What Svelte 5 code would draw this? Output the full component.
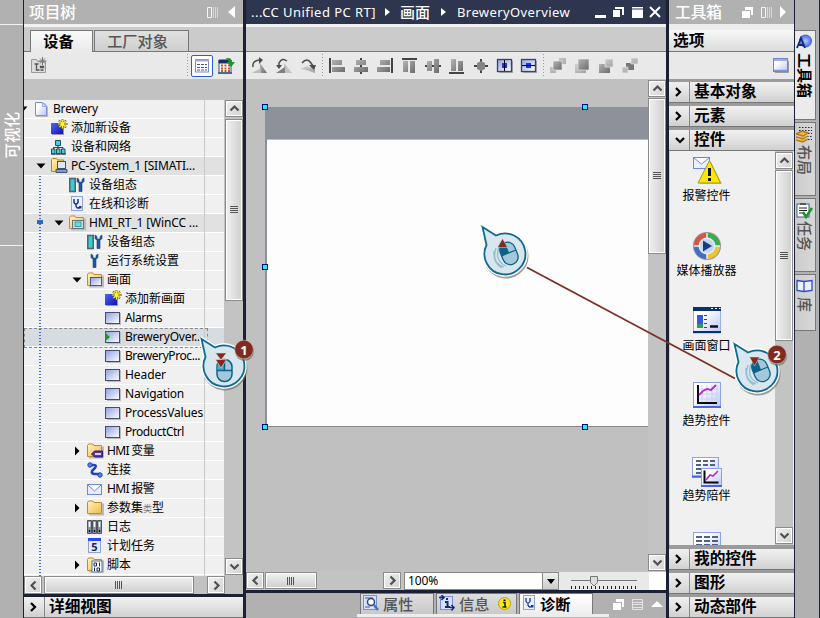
<script>
  // Spreads letters so that a label takes exactly w pixels.
  function fit(node, w) {
    if (!w) return;
    const n = [...node.textContent].length;
    const natural = node.getBoundingClientRect().width;
    node.style.letterSpacing = (w - natural) / n + 'px';
  }

  const rows = [
    { t: 'Brewery', l: 0, i: 'page', a: 'd', w: 45 },
    { t: '添加新设备', l: 1, i: 'add' },
    { t: '设备和网络', l: 1, i: 'net' },
    { t: 'PC-System_1 [SIMATI...', l: 1, i: 'pc', a: 'd', w: 124, hl: true },
    { t: '设备组态', l: 2, i: 'config' },
    { t: '在线和诊断', l: 2, i: 'diag' },
    { t: 'HMI_RT_1 [WinCC ...', l: 2, i: 'hmi', a: 'd', w: 109, hl: true },
    { t: '设备组态', l: 3, i: 'config' },
    { t: '运行系统设置', l: 3, i: 'wrench' },
    { t: '画面', l: 3, i: 'screens', a: 'd' },
    { t: '添加新画面', l: 4, i: 'add' },
    { t: 'Alarms', l: 4, i: 'screen', w: 37 },
    { t: 'BreweryOver...', l: 4, i: 'start', w: 78, sel: true },
    { t: 'BreweryProc...', l: 4, i: 'screen', w: 75 },
    { t: 'Header', l: 4, i: 'screen', w: 41 },
    { t: 'Navigation', l: 4, i: 'screen', w: 59 },
    { t: 'ProcessValues', l: 4, i: 'screen', w: 78 },
    { t: 'ProductCtrl', l: 4, i: 'screen', w: 59 },
    { t: 'HMI 变量', l: 3, i: 'tags', a: 'r', w: 47 },
    { t: '连接', l: 3, i: 'link' },
    { t: 'HMI 报警', l: 3, i: 'mail', w: 47 },
    { t: '参数集类型', l: 3, i: 'folder', a: 'r', w: 57 },
    { t: '日志', l: 3, i: 'logs' },
    { t: '计划任务', l: 3, i: 'task' },
    { t: '脚本', l: 3, i: 'script', a: 'r' }
  ];
  const controls = [
    { t: '报警控件', i: 'alarm' },
    { t: '媒体播放器', i: 'media' },
    { t: '画面窗口', i: 'window' },
    { t: '趋势控件', i: 'trend' },
    { t: '趋势陪伴', i: 'companion' },
    { t: '', i: 'table' }
  ];
  const sideTabs = [
    { t: '工具箱', i: 'shapes', h: 90, on: true },
    { t: '布局', i: 'layers', h: 74 },
    { t: '任务', i: 'tasks', h: 74 },
    { t: '库', i: 'book', h: 57 }
  ];
  const tools = [
    ['rot1', 'rot2', 'rot3'],
    ['al', 'ac', 'ar', 'at', 'am', 'ab', 'cc', 'ch', 'cv'],
    ['z1', 'z2', 'z3', 'z4']
  ];
</script>

<svg width="0" height="0" class="defs">
  <defs>
    <linearGradient id="gBlue" x1="0" y1="0" x2="1" y2="1"><stop offset="0" stop-color="#8ea0e0" /><stop offset="1" stop-color="#fff" /></linearGradient>
    <linearGradient id="gPage" x1="0" y1="0" x2="1" y2="1"><stop offset="0.3" stop-color="#fff" /><stop offset="1" stop-color="#b9c6f5" /></linearGradient>
    <linearGradient id="gSq" x1="0" y1="0" x2="1" y2="1"><stop offset="0" stop-color="#4a6af8" /><stop offset="1" stop-color="#1010b8" /></linearGradient>
    <linearGradient id="gFold" x1="0" y1="0" x2="1" y2="1"><stop offset="0" stop-color="#fff3c0" /><stop offset="1" stop-color="#f0bb48" /></linearGradient>
    <linearGradient id="gGray" x1="0" y1="0" x2="1" y2="1"><stop offset="0" stop-color="#b4b4b4" /><stop offset="1" stop-color="#6c6c6c" /></linearGradient>
    <linearGradient id="gLight" x1="0" y1="0" x2="1" y2="1"><stop offset="0" stop-color="#d0d0d0" /><stop offset="1" stop-color="#a0a0a0" /></linearGradient>
    <radialGradient id="gBall"><stop offset="0" stop-color="#b5c8ff" /><stop offset="1" stop-color="#3f62e6" /></radialGradient>
  </defs>
</svg>

{#snippet treeIcon(n)}
  <svg class="ti" width="18" height="18" viewBox="0 0 18 18">
    {#if n === 'page'}
      <path d="M3 3h9l3 4v10H3z" fill="#bbb" /><path d="M2.500 2.500h7l4 4v9h-11z" fill="url(#gPage)" stroke="#7d8fe0" /><path d="M9.500 2.500v4h4z" fill="#d5ddfb" stroke="#7d8fe0" stroke-width=".7" />
    {:else if n === 'add'}
      <path d="M1 5h12v11H1z" fill="#999" /><path d="M0 4h12v11H0z" fill="url(#gSq)" /><path d="M11.500 0v10M6.500 5h10M8 1.500l7 7M15 1.500l-7 7" stroke="#5b5b18" stroke-width="1.800" /><path d="M11.500 .5v9M7 5h9M8.500 2l6 6M14.500 2l-6 6" stroke="#fff23a" stroke-width="1.200" />
    {:else if n === 'net'}
      <path d="M7 6v5M2.500 12v-2.500h9.500v2.500" fill="none" stroke="#1c4472" /><path d="M4.500 2.500h5v5h-5zM.5 11h3.500v5h-3.500zM5.500 11h3.500v5h-3.500zM10.500 11h3.500v5h-3.500z" fill="#39d5dc" stroke="#2b4a66" /><path d="M0 16h15" stroke="#333" />
    {:else if n === 'pc'}
      <path d="M.5 14.500v-12l1-1h4l1 1.500h6v11.500z" fill="url(#gFold)" stroke="#b98320" /><rect x="6.500" y="4.500" width="8" height="7" fill="#dce6f8" stroke="#39557e" /><path d="M5 12.500h11v3H5z" fill="#8d99ad" stroke="#39557e" />
    {:else if n === 'hmi' || n === 'screens' || n === 'script' || n === 'tags' || n === 'folder'}
      <path d="M2 15.500h14v-11" fill="none" stroke="#bbb" stroke-width="2" />
      <path d="M.5 14.500v-11l1-1.500h4.500l1 1.500h7.500v11z" fill="url(#gFold)" stroke="#c18c2c" />
      {#if n === 'hmi'}<rect x="3.500" y="6.500" width="11" height="8" fill="#d3d9dd" stroke="#66737b" /><rect x="6" y="8" width="6" height="4.500" fill="#5fe0e0" stroke="#2e7d84" stroke-width=".7" />
      {:else if n === 'screens'}<rect x="3.500" y="6.500" width="11" height="8" fill="url(#gBlue)" stroke="#4a5a90" />
      {:else if n === 'script'}<rect x="5" y="5" width="10" height="11" fill="#fff" stroke="#4a76a0" /><path d="M7 7h2.500v3h-2.500zM12.500 6.500v4M7.500 11.500v3.500M10 12h2.500v3h-2.500z" fill="none" stroke="#16245c" />
      {:else if n === 'tags'}<path d="M4.500 12l3-3h8v6h-8z" fill="#5b35a8" stroke="#321870" /><path d="M8 12h6" stroke="#fff" stroke-width="1.500" />{/if}
    {:else if n === 'config'}
      <rect x=".8" y="2.500" width="5.400" height="13" fill="#2ad4d6" stroke="#59626c" stroke-width="1.600" /><path d="M8 2v3.500l2 2v8h3v-8l2-2V2L13 3.500V6h-3V3.500z" fill="#2157a0" stroke="#18406f" stroke-width=".6" />
    {:else if n === 'wrench'}
      <path d="M4 2v3.500l2 2v8h3v-8l2-2V2L9 3.500V6H6V3.500z" fill="#2157a0" stroke="#18406f" stroke-width=".6" />
    {:else if n === 'diag'}
      <rect x="2.500" y="1.500" width="11" height="14" fill="#edf1ff" stroke="#93a2d8" /><path d="M5 4v3.500q2 3 4 0V4M7 9v2q1 3 3.500 1.500" fill="none" stroke="#173a86" stroke-width="1.500" /><rect x="10" y="11" width="2.500" height="2.500" fill="#173a86" />
    {:else if n === 'screen' || n === 'start'}
      <path d="M2 4h14v12H2z" fill="#bbb" /><rect x=".5" y="3.500" width="14" height="11" fill="url(#gBlue)" stroke="#444e6c" />
      {#if n === 'start'}<path d="M0 4.500l5 4.500-5 4.500z" fill="#1d9428" />{/if}
    {:else if n === 'link'}
      <path d="M2 4h5q3 0 1 3l-3 3q-1 3 3 3h5" fill="none" stroke="#2045b8" stroke-width="2.500" /><circle cx="3" cy="4" r="2.200" fill="#5a7dee" stroke="#2045b8" /><circle cx="13" cy="14" r="2.200" fill="#5a7dee" stroke="#2045b8" />
    {:else if n === 'mail'}
      <rect x=".5" y="4.500" width="14" height="10" fill="#e6ecff" stroke="#7088d8" /><path d="M1 5l6.500 6L14 5" fill="#fff" stroke="#7088d8" />
    {:else if n === 'logs'}
      <path d="M.5 2.500h4v13h-4zM5.500 2.500h4v13h-4zM10.500 2.500h4v13h-4z" fill="#8a93a0" stroke="#4b545f" /><path d="M2.500 4v5M7.500 4v5M12.500 4v5" stroke="#fff" stroke-width="1.600" /><path d="M2.500 12v2M7.500 12v2M12.500 12v2" stroke="#111" stroke-width="1.500" />
    {:else if n === 'task'}
      <rect x="1.500" y="1.500" width="12" height="14" fill="#e6ebff" stroke="#93a2d8" /><path d="M1 1h13v3H1z" fill="#2c4bea" /><text x="7.500" y="13.500" text-anchor="middle" class="five">5</text>
    {/if}
  </svg>
{/snippet}

{#snippet tool(n)}
  <svg width="24" height="24" viewBox="-12 -12 24 24">
    {#if n === 'rot1'}
      <path d="M0 7V-3L7 7z" fill="url(#gGray)" /><path d="M-8 7l9-5v5z" fill="#bbb" /><path d="M-7 1q-1-6 6-7" fill="none" stroke="#4c4c4c" stroke-width="1.500" /><path d="M-1-9l4 3-4 4z" fill="#4c4c4c" />
    {:else if n === 'rot2'}
      <path d="M0 7V-3L8 7z" fill="#c2c2c2" /><path d="M-8 7l9-6v6z" fill="#808080" /><path d="M3-5q-5-4-8 2v3" fill="none" stroke="#4c4c4c" stroke-width="1.500" /><path d="M-8-1h6l-3 4z" fill="#4c4c4c" />
    {:else if n === 'rot3'}
      <path d="M-8 3l8-3v4z" fill="#c2c2c2" /><path d="M-5 3l12 4V0z" fill="url(#gLight)" /><path d="M-6-3q5-6 9 0l2 3" fill="none" stroke="#4c4c4c" stroke-width="1.500" /><path d="M1-1h7l-2 5z" fill="#4c4c4c" />
    {:else if n === 'al'}
      <path d="M-7-8v15" stroke="#444" stroke-width="2" /><path d="M-5-6h10v5H-5zM-5 1H8v5H-5z" fill="url(#gGray)" />
    {:else if n === 'ac'}
      <path d="M0-8V8" stroke="#444" stroke-width="2" /><path d="M-5-6H5v5H-5zM-7 1H7v5H-7z" fill="url(#gGray)" />
    {:else if n === 'ar'}
      <path d="M7-8v15" stroke="#444" stroke-width="2" /><path d="M-5-6H5v5H-5zM-8 1H5v5H-8z" fill="url(#gGray)" />
    {:else if n === 'at'}
      <path d="M-7-7H8" stroke="#444" stroke-width="2" /><path d="M-6-5h5V6h-5zM1-5h5V7H1z" fill="url(#gGray)" />
    {:else if n === 'am'}
      <path d="M-8 0H8" stroke="#444" stroke-width="2" /><path d="M-6-5h5v10h-5zM1-7h5V7H1z" fill="url(#gGray)" />
    {:else if n === 'ab'}
      <path d="M-8 7H7" stroke="#444" stroke-width="2" /><path d="M-6-7h5V5h-5zM1-5h5v10H1z" fill="url(#gGray)" />
    {:else if n === 'cc'}
      <path d="M-7 0H7M0-7V7" stroke="#444" stroke-width="2" /><path d="M-4-3l4-2 4 2v6L0 5l-4-2z" fill="#858585" />
    {:else if n === 'ch' || n === 'cv'}
      <path d="M-6-5H8V7H-6z" fill="#aaa" /><rect x="-7.500" y="-6.500" width="14" height="12" fill="url(#gBlue)" stroke="#36426e" stroke-width="1.300" />
      {#if n === 'ch'}<rect x="-3" y="-3" width="5" height="5" fill="#1c35d8" /><path d="M-.5-6V5" stroke="#000" />
      {:else}<rect x="-3" y="-3" width="5" height="5" fill="#1c35d8" /><path d="M-7-.5H6" stroke="#000" />{/if}
    {:else if n === 'z1'}
      <path d="M1-8h7v6H1zM-8 1h6v6h-6z" fill="url(#gLight)" /><path d="M-5-5h9v9h-9z" fill="url(#gGray)" stroke="#eee" stroke-width=".6" />
    {:else if n === 'z2'}
      <path d="M-7-2H4v9H-7z" fill="url(#gLight)" /><path d="M-4-7H7V4H-4z" fill="url(#gGray)" stroke="#eee" stroke-width=".6" />
    {:else if n === 'z3'}
      <path d="M-7-2H4v9H-7z" fill="url(#gGray)" /><path d="M-1-7H7v8h-8z" fill="url(#gLight)" stroke="#eee" stroke-width=".6" />
    {:else}
      <path d="M-4-3h8v7h-8z" fill="#777" /><path d="M1-8h7v6H1zM-8 1h6v6h-6z" fill="url(#gLight)" stroke="#eee" stroke-width=".6" />
    {/if}
  </svg>
{/snippet}

{#snippet arrow(d)}
  <svg width="11" height="11" viewBox="-5.5 -5.5 11 11"><path d="M-4 2L0-2 4 2" transform="rotate({d})" fill="none" stroke="#505050" stroke-width="2.200" /></svg>
{/snippet}

{#snippet cards()}
  <svg width="11" height="11" viewBox="0 0 11 11"><path d="M3 0h8v8H9V3H3z" fill="#fff" /><path d="M0 4h8v7H0z" fill="#fff" /></svg>
{/snippet}
{#snippet bars()}
  <svg width="11" height="11" viewBox="0 0 11 11"><path d="M.5.5h4v10h-4z" fill="none" stroke="#f4f4f4" /><path d="M6.500 0v11M8.500 0v11M10.500 0v11" stroke="#d8d8d8" /></svg>
{/snippet}

{#snippet mouse(kind)}
  {#if kind === 'double'}
    <rect x="-7" y="-6.500" width="15" height="22" rx="7.300" fill="#a3c8da" stroke="#0d6289" stroke-width="1.500" />
    <path d="M-6.500 4V0Q-6-6 .5-6v10z" fill="#56a3c4" /><path d="M-7 4.500H8M.5-6V4.500" stroke="#0d6289" stroke-width="1.500" />
    <path d="M-8.500-13H2.500L-3-6z M-8.500-6.500H2.500L-3 2z" fill="#812b20" stroke="#e4dcde" stroke-width=".6" />
  {:else}
    <path d="M-9-6q-5 15 8 19M-6-7q-5 14 7 19M-11-3q-1 12 8 17" fill="none" stroke="#8fbdd2" stroke-width="1.300" />
    <g transform="translate(3.500 -1) rotate(-22)">
      <rect x="-7.500" y="-11" width="15.500" height="23" rx="7.700" fill="#a3c8da" stroke="#0d6289" stroke-width="1.300" />
      <path d="M-7.500 0v-4Q-6-11 0-11V0z" fill="#0d6289" /><path d="M-7.500 0h15.500M0-11V0" stroke="#0d6289" stroke-width="1.300" />
    </g>
    {#if kind === 'press'}<path d="M-7.500-14H2.500L-2.500-5z" fill="#812b20" stroke="#d9e5ec" stroke-width=".5" />
    {:else}<path d="M-7.500-6.500H2.500L-2.500-15.500z" fill="#812b20" stroke="#d9e5ec" stroke-width=".5" />{/if}
  {/if}
{/snippet}

{#snippet callout(x, y, kind, num)}
  <svg class="callout" style="left:{x - 35}px;top:{y - 35}px" width="70" height="70" viewBox="-35 -35 70 70">
    <path d="M-22.500-27L-9-18.500A20.500 20.500 0 1 1-18.500-9z" fill="#777" stroke="#777" stroke-width="4" opacity=".7" transform="translate(1 2)" />
    <path d="M-22.500-27L-9-18.500A20.500 20.500 0 1 1-18.500-9z" fill="#dae6ed" stroke="#fff" stroke-width="4.500" stroke-linejoin="round" />
    <path d="M-22.500-27L-9-18.500A20.500 20.500 0 1 1-18.500-9z" fill="#dae6ed" stroke="#0d6b91" stroke-width="1.800" />
    {@render mouse(kind)}
    {#if num}
      <circle cx="20.500" cy="-14.500" r="9.500" fill="#555" opacity=".5" /><circle cx="20" cy="-16.500" r="9.300" fill="#812b20" stroke="#c9b5b2" stroke-width=".6" />
      <text x="20" y="-11.500" text-anchor="middle" class="num">{num}</text>
    {/if}
  </svg>
{/snippet}

<div class="app">
  <aside class="rail"><div class="railin"><span>可视化</span></div></aside>

  <section class="left">
    <header class="bar"><b>项目树</b><i class="sp"></i>{@render bars()}<svg width="7" height="12"><path d="M7 0v12L0 6z" fill="#fff" /></svg></header>
    <div class="tabs"><div class="tab on">设备</div><div class="tab">工厂对象</div></div>
    <div class="ltools">
      <svg width="18" height="18" viewBox="0 0 18 18"><path d="M.5 15.500v-13h5l1 2h8v11z" fill="#dcdcdc" stroke="#9a9a9a" /><path d="M3.500 7h4M5.500 7v6h3M9.500 9.500h3v1h-3zM9.500 13h3" fill="none" stroke="#555" stroke-width="1.300" /><path d="M11.500 0v8M7.500 4h8M9 1.500l5 5M14 1.500l-5 5" stroke="#777" /></svg>
      <i class="sp"></i><i class="dots"></i>
      <div class="toggle"><svg width="16" height="16"><rect x="1.500" y="1.500" width="13" height="12.500" fill="#fff" stroke="#7889b8" /><path d="M1 2.500h14" stroke="#99a9dc" stroke-width="2" /><path d="M3 6.500h10M3 9.500h10M3 12h10" stroke="#4a5478" stroke-dasharray="3 1" /></svg></div>
      <svg width="18" height="18"><rect x="1" y="4" width="12" height="12" fill="#fff" stroke="#34507c" /><path d="M1 3h12v3H1zM0 16h14" fill="#14316a" stroke="#14316a" /><path d="M3 8.500h9M3 11.500h9M3 14h9" stroke="#c4521c" stroke-width="2" stroke-dasharray="2 1.500" /><path d="M7 2q6-3 7 3h3l-4 5-4-5h2q-1-3-4-3z" fill="#23902e" /></svg>
    </div>
    <div class="treewrap">
      <div class="tree">
        {#each rows as r}
          <div class="row" class:hl={r.hl} class:sel={r.sel} style="padding-left:{9 + r.l * 18 - 17}px">
            <svg class="exp" width="17" height="18">{#if r.a === 'd'}<path d="M2.500 6.500h9l-4.500 5z" fill="#000" />{:else if r.a === 'r'}<path d="M5 4.500v9l4.500-4.500z" fill="#000" />{/if}</svg>
            {@render treeIcon(r.i)}
            <span class="lbl"><span use:fit={r.w}>{#if r.t === '参数集类型'}参数集<small>类</small>型{:else}{r.t}{/if}</span></span>
          </div>
        {/each}
        <i class="col"></i><i class="track"></i><i class="knob"></i>
      </div>
      <div class="vs tv"><div class="btn">{@render arrow(0)}</div><div class="thumb" style="height:182px"><i class="gv"></i></div><i class="sp"></i><div class="btn">{@render arrow(180)}</div></div>
    </div>
    <div class="hs"><div class="btn">{@render arrow(-90)}</div><div class="thumb" style="width:150px"><i class="gh"></i></div><i style="width:13px"></i><div class="btn">{@render arrow(90)}</div></div>
    <div class="acc detail"><span class="ar"><svg width="9" height="12"><path d="M2 2l4 4-4 4" /></svg></span>详细视图</div>
  </section>

  <main>
    <header class="title">
      <span use:fit={125}>...CC Unified PC RT]</span><svg width="5" height="8"><path d="M0 0l5 4-5 4z" fill="#fff" /></svg>
      <b>画面</b><svg width="5" height="8"><path d="M0 0l5 4-5 4z" fill="#fff" /></svg>
      <span class="t2"><span use:fit={113}>BreweryOverview</span></span><i class="sp"></i>
      <svg width="66" height="14" viewBox="0 0 66 14"><path d="M0 10h11v3H0z" fill="#fff" /><path d="M20 2h9v8h-2V4h-7z" fill="#fff" /><path d="M18 5h7v7h-7z" fill="#fff" /><path d="M37 2h11v1.500H37zM37 4.500h11V13H37z" fill="#fff" /><path d="M55 2l10 10M65 2L55 12" stroke="#fff" stroke-width="2" /></svg>
    </header>
    <div class="strip"></div>
    <div class="ctools">
      {#each tools as g, k}
        {#if k}<i class="dots"></i>{/if}
        <div class="grp">{#each g as n}{@render tool(n)}{/each}</div>
      {/each}
    </div>
    <div class="work">
      <div class="canvas"><div class="screen"><div class="shead"></div></div></div>
      <div class="vs cvs"><div class="btn">{@render arrow(0)}</div><div class="thumb" style="height:156px"><i class="gv"></i></div><i class="sp"></i><div class="btn">{@render arrow(180)}</div></div>
    </div>
    <div class="zoombar">
      <div class="btn">{@render arrow(-90)}</div><div class="thumb" style="width:52px"><i class="gh"></i></div><i class="sp"></i><div class="btn">{@render arrow(90)}</div>
      <div class="combo"><span use:fit={30}>100%</span><i class="dd"><svg width="8" height="5"><path d="M0 0h8L4 5z" /></svg></i></div>
      <div class="slider"><svg width="90" height="18"><path d="M12 8.500h66" stroke="#777" /><path d="M12.500 14v3M16.500 14v3M20.500 14v3M24.500 14v3M28.500 14v3M32.500 14v3M36.500 14v3M40.500 14v3M44.500 14v3M48.500 14v3M52.500 14v3M56.500 14v3M60.500 14v3M64.500 14v3M68.500 14v3M72.500 14v3M76.500 14v3" stroke="#222" /><path d="M31.500 4.500h7v6l-3.500 3.500-3.500-3.500z" fill="#ddd" stroke="#777" /></svg></div>
      <i class="corner"></i>
    </div>
    <div class="bottom">
      <div class="btabs">
        <div class="bt" style="width:74px"><svg width="16" height="16"><rect x=".5" y=".5" width="13" height="14" fill="#d7e0fa" stroke="#7a8fd4" /><path d="M2 3h8M2 12h5" stroke="#3e5da8" /><circle cx="8" cy="7" r="3.500" fill="#fff" stroke="#30476e" stroke-width="1.500" /><path d="M11 10l4 5" stroke="#3978c0" stroke-width="2.500" /></svg>属性</div>
        <div class="bt" style="width:81px"><svg width="16" height="16"><rect x="1.500" y="1.500" width="12" height="13" fill="#d7e0fa" stroke="#7a8fd4" /><path d="M0 2.500h4M2.500 0l2.500 2.500L2.500 5M11 12.500h4M12.500 10l2.500 2.500-2.500 3" stroke="#142a6a" stroke-width="1.500" fill="none" /><path d="M6 7h2.500v5M6 12h5" stroke="#142a6a" stroke-width="2" fill="none" /><path d="M7 3h2v2H7z" fill="#142a6a" /></svg>信息<svg class="info" width="13" height="13"><circle cx="6.500" cy="6.500" r="6" fill="#ffe81c" stroke="#c0a000" /><path d="M5 5.500h2v4M4.500 10h4" stroke="#222" stroke-width="1.600" fill="none" /><path d="M5.500 2.500h2v1.500h-2z" /></svg></div>
        <div class="bt on" style="width:74px"><svg width="14" height="16"><rect x="1.500" y=".5" width="11" height="14" fill="#edf1ff" stroke="#93a2d8" /><path d="M4 3v3.500q2 3 4 0V3M6 8v2q1 3 3.500 1.500" fill="none" stroke="#173a86" stroke-width="1.300" /><rect x="9" y="10" width="2.500" height="2.500" fill="#173a86" /></svg>诊断</div>
      </div>
      <div class="bicons">{@render cards()}<svg width="11" height="11"><path d="M.5.5h10v10h-10zM0 3.500h11M0 5.500h11M0 8.500h11" fill="none" stroke="#e4e4e4" /></svg><svg width="12" height="6"><path d="M0 6h12L6 0z" fill="#fff" /></svg></div>
      <i class="foot"></i>
    </div>
  </main>

  <section class="right">
    <header class="bar"><b>工具箱</b><i class="sp"></i>{@render cards()}{@render bars()}<svg width="6" height="12"><path d="M0 0v12l6-6z" fill="#fff" /></svg></header>
    <div class="opts">选项</div>
    <div class="rtools"><svg width="16" height="15"><path d="M2 14.500h13.500V3" fill="none" stroke="#999" /><rect x=".5" y=".5" width="14" height="13" fill="url(#gPage)" stroke="#7086cc" /><path d="M1 2h13M1 12.500h13" stroke="#7d93e4" stroke-width="1.500" /></svg></div>
    {#each ['基本对象', '元素', '控件'] as t, k}
      <div class="acc"><span class="ar">{#if k === 2}<svg width="12" height="9"><path d="M2 2l4 4 4-4" /></svg>{:else}<svg width="9" height="12"><path d="M2 2l4 4-4 4" /></svg>{/if}</span>{t}</div>
    {/each}
    <div class="list">
      <div class="items">
        {#each controls as c}
          <div class="item">
            <svg width="30" height="30" viewBox="0 0 30 30">
              {#if c.i === 'alarm'}
                <rect x="1.500" y=".5" width="16" height="11" fill="#eaf0ff" stroke="#7088d8" /><path d="M2 1l7.500 6L17 1" fill="#fff" stroke="#7088d8" /><path d="M19 5l11 22H8z" fill="#999" opacity=".6" /><path d="M17.500 3.500l11 22.500H6z" fill="#ffe800" stroke="#b09800" /><path d="M16 11h3v8h-3zM16 21h3v3h-3z" fill="#0c1840" />
              {:else if c.i === 'media'}
                <circle cx="15" cy="14" r="14" fill="#8c969f" /><path d="M15 14V1A13 13 0 0 0 2 14z" fill="#dd5240" /><path d="M15 14V1a13 13 0 0 1 13 13z" fill="#35ad4a" /><path d="M15 14V27A13 13 0 0 1 2 14z" fill="#416fc5" /><path d="M15 14V27a13 13 0 0 0 13-13z" fill="#ecc436" /><path d="M15 1v26M2 14h26" stroke="#eee" stroke-width="1.500" /><circle cx="15" cy="14" r="8.500" fill="#e6ecf4" /><circle cx="15" cy="14" r="7" fill="#c5d5ea" /><path d="M11 8.500l9 5.500-9 5.500z" fill="#153c85" />
              {:else if c.i === 'window'}
                <rect x="1.500" y="1" width="27" height="25" fill="url(#gPage)" stroke="#9cb0e8" /><path d="M1 0h28v4H1zM1 24h28v2H1z" fill="#0a3272" /><path d="M19 1.500h2M23 1.500h2M27 1.500h1.500" stroke="#fff" /><path d="M5 8h6v9H5z" fill="#3458e0" /><path d="M5 17h6v4H5z" fill="#28a050" /><path d="M12 8.500h3M12 12.500h3M12 16.500h3M12 20.500h3" stroke="#444" /><path d="M18 19.500h8" stroke="#111" stroke-width="2.500" />
              {:else if c.i === 'trend'}
                <rect x="1.500" y=".5" width="27" height="25" fill="url(#gPage)" stroke="#8da2e2" /><path d="M1 25h28" stroke="#4767dc" stroke-width="2" /><path d="M10 3v17M15 3v17M20 3v17M25 3v17M6 7h20M6 12h20M6 17h20" stroke="#c9d1ee" /><path d="M6 3v18h19" fill="none" stroke="#050518" stroke-width="2" /><path d="M7 13l4-4 4-2 4 1 5-5" fill="none" stroke="#bd24d0" stroke-width="1.800" />
              {:else if c.i === 'companion'}
                <rect x=".5" y=".5" width="26" height="20" fill="url(#gPage)" stroke="#8da2e2" /><path d="M0 19.500h27" stroke="#4767dc" stroke-width="2" /><path d="M4 4h20M4 8h20M4 12h20M4 16h20" stroke="#526086" stroke-width="2" stroke-dasharray="5 2" /><rect x="9.500" y="11.500" width="20" height="17" fill="url(#gPage)" stroke="#8da2e2" /><path d="M9 29h21" stroke="#4767dc" stroke-width="2" /><path d="M12.500 13.500v12h14" fill="none" stroke="#050518" stroke-width="2" /><path d="M14 23l4-5 3 1 5-5" fill="none" stroke="#bd24d0" stroke-width="1.600" />
              {:else}
                <rect x="1.500" y=".5" width="27" height="26" fill="url(#gPage)" stroke="#8da2e2" /><path d="M4 5h22M4 9h22M4 13h22" stroke="#526086" stroke-width="2" stroke-dasharray="6 2" />
              {/if}
            </svg>
            <span>{c.t}</span>
          </div>
        {/each}
      </div>
      <div class="vs"><div class="btn">{@render arrow(0)}</div><div class="thumb" style="height:171px"><i class="gv"></i></div><i class="sp"></i><div class="btn">{@render arrow(180)}</div></div>
    </div>
    {#each ['我的控件', '图形', '动态部件'] as t}
      <div class="acc"><span class="ar"><svg width="9" height="12"><path d="M2 2l4 4-4 4" /></svg></span>{t}</div>
    {/each}
  </section>

  <aside class="side">
    {#each sideTabs as s}
      <div class="stab" class:on={s.on} style="height:{s.h}px">
        <svg width="17" height="17" viewBox="0 0 17 17">
          {#if s.i === 'shapes'}<circle cx="9.500" cy="7" r="6.500" fill="url(#gBall)" /><path d="M1 14L5 4l4 10M3 11h5" stroke="#102a70" stroke-width="1.800" fill="none" />
          {:else if s.i === 'layers'}<path d="M3 1.500h13M3 4.500h13M9 7.500h7M11 10.500h5M12 13.500h4" stroke="#1b2540" stroke-width="1.200" stroke-dasharray="1.500 1.500" /><path d="M0 8l6-3 6 2-5 3zM0 11l7 2 5-3M0 14l7 2 5-3" fill="#f0b93c" stroke="#b37c18" stroke-width="1.400" />
          {:else if s.i === 'tasks'}<rect x="1" y="2" width="12" height="13" fill="#fff" stroke="#365c90" /><path d="M4 1h6v2H4z" fill="#555" /><path d="M3 6h8M3 8.500h8M3 11h6" stroke="#222" /><path d="M7 10l3 5 6-9" fill="none" stroke="#1d9428" stroke-width="2.500" />
          {:else}<path d="M1 2.500l7 1 8-1v10l-8 1-7-1z" fill="#edf1ff" stroke="#2b4fc8" stroke-width="1.300" /><path d="M8 3.500v10" stroke="#2b4fc8" stroke-width="1.300" />{/if}
        </svg>
        <span>{s.t}</span>
      </div>
    {/each}
  </aside>

  {#each [[265, 107], [585, 107], [265, 267], [265, 427], [585, 427]] as [x, y]}
    <i class="handle" style="left:{x - 3}px;top:{y - 3}px"></i>
  {/each}
  <svg class="line" width="820" height="618"><path d="M527 267.500L735 378.500" stroke="#7b3025" stroke-width="1.800" /></svg>
  {@render callout(224, 366, 'double', '1')}
  {@render callout(505, 254, 'release', '')}
  {@render callout(757, 371, 'press', '2')}
</div>

<style>
  :global(body) { margin: 0; }
  .defs { position: absolute; }
  i { display: block; flex: none; }
  svg { flex: none; display: block; }
  .sp { flex: 1; }
  .app { position: relative; width: 820px; height: 618px; overflow: hidden; display: flex; background: #1b2134; font: 12px "Noto Sans", "Noto Sans CJK SC", sans-serif; color: #000; box-sizing: border-box; }
  .app * { box-sizing: border-box; }
  .rail { width: 23px; background: #b1b1b1; margin-right: 1px; padding-top: 24px; }
  .railin { height: 222px; border-top: 1px solid #f2f2f2; border-bottom: 1px solid #f2f2f2; padding-top: 87px; }
  .railin span { display: block; writing-mode: vertical-rl; text-orientation: sideways; transform: rotate(180deg); color: #fff; font: 500 15.500px/23px "Noto Sans CJK SC", sans-serif; }
  .left { width: 219px; display: flex; flex-direction: column; background: #c2c2c2; margin-right: 3px; }
  .bar { height: 24px; flex: none; background: #b1b1b1; color: #fff; display: flex; align-items: center; gap: 8px; padding: 0 8px 0 6px; font-size: 15.700px; line-height: 24px; }
  .left .bar { gap: 10px; padding-left: 5px; }
  .bar b { font-weight: 500; font-family: "Noto Sans CJK SC", sans-serif; }
  .tabs { height: 28px; border-top: 3px solid #f1f1f1; background: #cbcbcb; display: flex; align-items: flex-end; padding: 0 0 0 6px; border-bottom: 1px solid #777; flex: none; }
  .tab { height: 21px; border: 1px solid #777; border-bottom: 0; background: linear-gradient(#e0e0e0, #cfcfcf); font: 500 15.200px/18px "Noto Sans CJK SC", sans-serif; color: #555; text-align: center; width: 95px; padding-right: 8px; margin-left: 1px; }
  .tab.on { width: 63px; margin: 0 0 -1px; height: 22px; background: linear-gradient(#fafafa, #e9e9e9); color: #000; font-weight: bold; padding: 0 6px 0 0; }
  .ltools { height: 27px; background: #e9e9e9; display: flex; align-items: center; padding: 0 7px 0 7px; flex: none; }
  .dots { width: 1px; height: 23px; background: repeating-linear-gradient(#999 0 1px, transparent 1px 3px); }
  .toggle { width: 22px; height: 22px; border: 1px solid #2b5fd0; border-radius: 2px; margin: 0 5px 0 3px; padding: 2px; background: #fff; }
  .treewrap { height: 476px; margin-top: 21px; display: flex; flex: none; }
  .tree { position: relative; width: 200px; background: #f0f0f0; overflow: hidden; }
  .row { height: 19px; border-bottom: 1px solid #fff; display: flex; align-items: center; white-space: nowrap; position: relative; }
  .row:first-child .exp { margin-left: -8px; }
  .row.hl { background: #e1e1e1; }
  .row.sel { background: #d7dce1; }
  .row.sel::after { content: ""; position: absolute; left: 0; top: 0; width: 182px; height: 18px; border: 1px dashed #888; }
  .lbl { padding-left: 2px; line-height: 18px; }
  small { font-size: 9px; color: #777; }
  .col { position: absolute; left: 180px; top: 0; width: 1px; height: 476px; background: #c9c9c9; }
  .track { position: absolute; left: 15px; top: 76px; width: 2px; height: 400px; background: repeating-linear-gradient(#3a70c8 0 1px, transparent 1px 3px); }
  .knob { position: absolute; left: 13px; top: 120px; width: 6px; height: 4px; background: #2f68c4; }
  .vs { width: 18px; display: flex; flex-direction: column; background: #c3c3c3; padding: 0 0 1px; gap: 2px; }
  .tv { margin-left: 1px; }
  .btn, .thumb { flex: none; border: 1px solid #8b8b8b; box-shadow: inset 0 0 0 1px #fff; background: linear-gradient(135deg, #f2f2f2, #d2d2d2); display: flex; align-items: center; justify-content: center; }
  .btn { width: 18px; height: 17px; }
  .vs .thumb { width: 18px; background: linear-gradient(90deg, #f1f1f1, #cecece); }
  .gv { width: 8px; height: 8px; background: repeating-linear-gradient(#555 0 1px, transparent 1px 2px); }
  .gh { width: 8px; height: 8px; background: repeating-linear-gradient(90deg, #555 0 1px, transparent 1px 2px); }
  .hs { height: 18px; display: flex; }
  .hs .btn { height: 18px; }
  .hs .thumb, .zoombar .thumb { height: 17px; background: linear-gradient(#f1f1f1, #cecece); }
  .hs .thumb { margin-left: 2px; height: 18px; }
  .acc { height: 21px; margin-bottom: 3px; flex: none; background: linear-gradient(#f0f0f0, #e2e2e2 50%, #d0d0d0); border-bottom: 1px solid #777; display: flex; align-items: flex-start; font: bold 15.700px/18px "Noto Sans CJK SC", sans-serif; }
  .ar { width: 21px; height: 20px; border-right: 1px solid #888; margin-right: 4px; display: flex; align-items: center; padding-left: 5px; }
  .ar path { fill: none; stroke: #000; stroke-width: 2.200; }
  .detail { margin: 3px 0 0; box-shadow: 0 -3px #1b2134; }

  main { width: 420px; display: flex; flex-direction: column; background: #c0c0c0; margin-right: 3px; }
  .title { height: 24px; flex: none; background: #2d354f; color: #fff; display: flex; align-items: center; padding: 0 5px 0 5px; font-size: 13px; white-space: nowrap; }
  .title > svg:nth-child(2) { margin: 0 10px 0 9px; }
  .title > svg:nth-child(4) { margin: 0 11px; }
  .title b { font: 500 15px/24px "Noto Sans CJK SC", sans-serif; }
  .strip { height: 28px; flex: none; border-top: 3px solid #f1f1f1; border-bottom: 1px solid #777; background: #cbcbcb; }
  .ctools { height: 27px; flex: none; background: #e9e9e9; display: flex; align-items: center; padding-left: 2px; gap: 2px; }
  .grp { display: flex; }
  .work { height: 492px; flex: none; display: flex; }
  .canvas { width: 402px; padding: 28px 0 0 19px; }
  .screen { height: 320px; background: #fdfdfd; border-left: 2px solid #8e9199; border-bottom: 1px solid #888; }
  .shead { height: 33px; background: #8e9199; border-bottom: 1px solid #bbb; }
  .cvs { padding: 1px 0 0; gap: 1px; }
  .zoombar { height: 19px; flex: none; padding-top: 1px; display: flex; background: #c3c3c3; }
  .zoombar .thumb { margin-left: 1px; }
  .combo { width: 155px; margin-left: 3px; border: 1px solid #888; background: #fff; display: flex; justify-content: space-between; line-height: 16px; padding-left: 3px; font-size: 12px; }
  .dd { width: 16px; background: linear-gradient(#f0f0f0, #ccc); border-left: 1px solid #888; display: flex; align-items: center; justify-content: center; }
  .slider { width: 90px; background: #e9e9e9; }
  .corner { width: 17px; background: #fff; }
  .bottom { height: 25px; margin-top: 3px; box-shadow: 0 -3px #1b2134; background: #b1b1b1; display: flex; padding-left: 114px; position: relative; }
  .btabs { display: flex; gap: 2px; height: 21px; }
  .bt { border: 1px solid #777; border-bottom: 0; background: linear-gradient(#dedede, #c9c9c9); display: flex; align-items: center; gap: 4px; padding: 0 0 2px 2px; font: 500 15.200px/18px "Noto Sans CJK SC", sans-serif; color: #555; }
  .bt.on { background: linear-gradient(#fff, #eee); color: #000; font-weight: bold; }
  .info { margin-left: 5px; }
  .bicons { display: flex; gap: 8px; align-items: center; height: 22px; padding-left: 20px; }
  .foot { position: absolute; left: 111px; bottom: 1px; width: 252px; height: 3px; background: #ededed; }

  .right { width: 125px; display: flex; flex-direction: column; background: #9b9b9b; margin-right: 1px; }
  .right .bar { padding-right: 8px; }
  .opts { height: 28px; flex: none; border-top: 6px solid #ededed; background: linear-gradient(#f8f8f8, #dcdcdc); border-bottom: 1px solid #777; font: bold 15.700px/19px "Noto Sans CJK SC", sans-serif; padding-left: 4px; }
  .rtools { height: 27px; flex: none; background: #e9e9e9; display: flex; justify-content: flex-end; align-items: center; padding: 0 5px 1px 0; margin-bottom: 3px; }
  .list { height: 394px; margin: -3px 0 4px; flex: none; background: #f0f0f0; display: flex; overflow: hidden; border-left: 1px solid #ccc; padding-right: 1px; }
  .list .vs { padding: 1px 0; gap: 1px; }
  .items { width: 105px; padding: 6px 0 0; display: flex; flex-direction: column; overflow: hidden; }
  .item { height: 75px; flex: none; display: flex; flex-direction: column; align-items: center; padding-right: 32px; }
  .item span { line-height: 17px; white-space: nowrap; font-size: 12px; }
  .side { width: 24px; background: #b1b1b1; padding-top: 30px; display: flex; flex-direction: column; gap: 2px; }
  .stab { width: 21px; border: 1px solid #777; border-left: 0; background: linear-gradient(90deg, #ccc, #d8d8d8); padding: 3px 0 0 1px; color: #555; flex: none; }
  .stab.on { background: #ebebeb; color: #000; }
  .stab span { display: block; writing-mode: vertical-rl; text-orientation: sideways; font: 500 15px/19px "Noto Sans CJK SC", sans-serif; margin-top: 2px; }
  .stab.on span { font-weight: bold; }
  .handle { position: absolute; width: 6px; height: 6px; background: #2fe6ea; border: 1px solid #001080; }
  .line { position: absolute; left: 0; top: 0; }
  .callout { position: absolute; overflow: visible; }
  .num { font: bold 13px "Noto Sans", sans-serif; fill: #fff; }
  .five { font: bold 11px "Noto Sans", sans-serif; fill: #16245c; }
</style>
